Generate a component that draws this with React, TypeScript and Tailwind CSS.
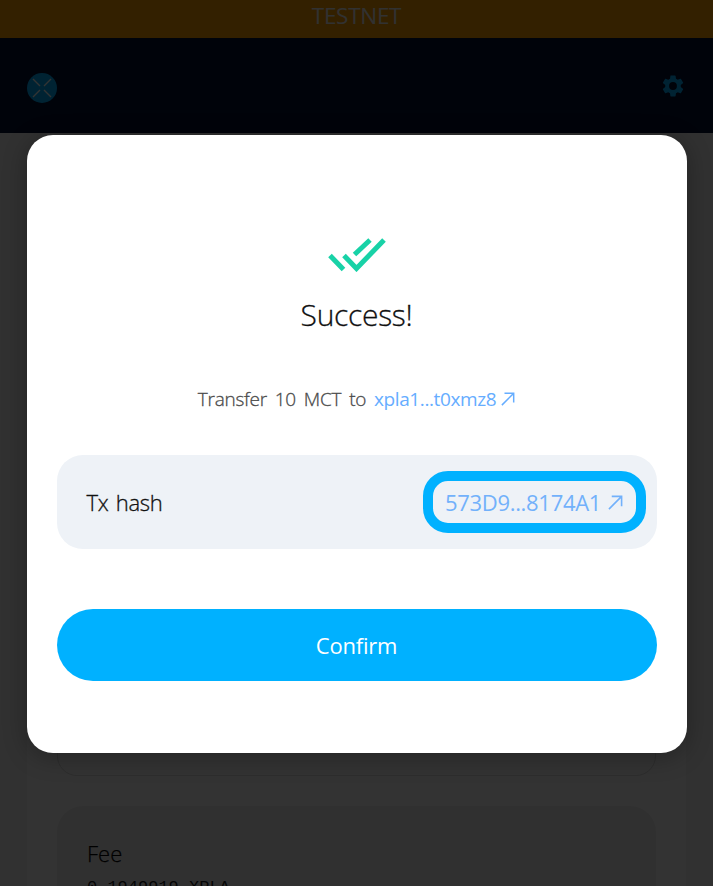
import React from "react";

function ArrowIcon({ className }: { className: string }) {
  return (
    <svg viewBox="0 0 16 16" fill="none" stroke="currentColor" strokeWidth="1.7" className={className}>
      <path d="M1 15 14.5 1.5M4 1.5h10.5v10.5" />
    </svg>
  );
}

function Logo() {
  return (
    <svg viewBox="0 0 30 30" className="h-[30px] w-[30px]">
      <circle cx="15" cy="15" r="15" fill="#00b1ff" />
      <path d="M6 6l7 7M24 6l-7 7M6 24l7-7M24 24l-7-7" stroke="#fff" strokeWidth="1.4" />
    </svg>
  );
}

function Gear() {
  return (
    <svg viewBox="0 0 24 24" fill="#00b1ff" className="h-[26px] w-[26px]">
      <path d="M19.14 12.94c.04-.3.06-.61.06-.94 0-.32-.02-.64-.07-.94l2.03-1.58a.49.49 0 0 0 .12-.61l-1.92-3.32a.488.488 0 0 0-.59-.22l-2.39.96c-.5-.38-1.03-.7-1.62-.94l-.36-2.54a.484.484 0 0 0-.48-.41h-3.84c-.24 0-.43.17-.47.41l-.36 2.54c-.59.24-1.13.57-1.62.94l-2.39-.96c-.22-.08-.47 0-.59.22L2.74 8.87c-.12.21-.08.47.12.61l2.03 1.58c-.05.3-.09.63-.09.94s.02.64.07.94l-2.03 1.58a.49.49 0 0 0-.12.61l1.92 3.32c.12.22.37.29.59.22l2.39-.96c.5.38 1.03.7 1.62.94l.36 2.54c.05.24.24.41.48.41h3.84c.24 0 .44-.17.47-.41l.36-2.54c.59-.24 1.13-.56 1.62-.94l2.39.96c.22.08.47 0 .59-.22l1.92-3.32c.12-.22.07-.47-.12-.61l-2.01-1.58zM12 15.6A3.6 3.6 0 1 1 12 8.4a3.6 3.6 0 0 1 0 7.2z" />
    </svg>
  );
}

function Page() {
  return (
    <div className="flex h-full flex-col bg-[#f4f4f4]">
      <div className="flex h-[38px] shrink-0 justify-center bg-[#ffa000] text-[22.5px] leading-[32px] text-[#f5f5f5]">
        <span className="tracking-[-0.3px]">TESTNET</span>
      </div>
      <header className="flex h-[95px] shrink-0 items-center justify-between bg-[#001032] pr-[27px] pl-[27px]">
        <div className="pt-1"><Logo /></div>
        <Gear />
      </header>
      <main className="mx-[27px] mt-[60px] flex flex-1 flex-col overflow-hidden bg-white px-[30px]">
        <div className="h-[583px] shrink-0 rounded-[20px] border border-[#dedede]" />
        <div className="mt-[30px] h-[200px] shrink-0 rounded-[26px] bg-[#f0f0f0] px-[30px] pt-[31px] text-black">
          <div className="text-[22px] leading-[32px] font-light [-webkit-text-stroke:0.25px]">Fee</div>
          <div className="pt-[9px] font-['Liberation_Mono',monospace] text-[17px] leading-[20px] text-[#222]">0.1949919 XPLA</div>
        </div>
      </main>
    </div>
  );
}

export default function App() {
  return (
    <div className="relative h-[886px] w-[713px] overflow-hidden font-['Open_Sans','Noto_Sans',sans-serif]">
      <Page />
      <div className="absolute inset-0 flex items-start justify-center bg-black/80 pt-[135px]">
        <section className="flex h-[618px] w-[660px] flex-col items-center rounded-[26px] bg-white px-[30px] pt-[103px] shadow-[0_4px_24px_rgba(0,0,0,0.3)]">
          <svg viewBox="0 0 58 34" className="h-[34px] w-[58px]" fill="none" stroke="#18d2a7" strokeWidth="5">
            <path d="M2 17.5 15.5 31.5M16 17.5 28.5 30.5 56 2M26.5 16.5 42 2" />
          </svg>
          <h1 className="mt-[23px] text-[30px] leading-[40px] font-light tracking-[-0.3px] text-[#101010] [-webkit-text-stroke:0.3px]">Success!</h1>
          <p className="mt-[50px] flex h-[28px] items-center text-[19px] text-[#4a4a4a]">
            <span className="font-light tracking-[-0.25px] whitespace-pre [-webkit-text-stroke:0.3px] [word-spacing:3.2px]">Transfer 10 MCT to </span>
            <a className="flex items-center tracking-[-0.4px] text-[#66adff]">xpla1...t0xmz8<ArrowIcon className="ml-[5px] h-[14px] w-[14px]" /></a>
          </p>
          <div className="mt-[42px] flex h-[94px] w-full shrink-0 items-center justify-between rounded-[26px] bg-[#eef2f7] pr-[11px] pl-[30px]">
            <span className="text-[22px] font-light tracking-[-0.3px] text-[#111] [-webkit-text-stroke:0.3px] [word-spacing:2px]">Tx hash</span>
            <a className="flex h-[62px] w-[223px] items-center justify-center rounded-[25px] border-[10px] border-[#00b1ff] text-[22px] text-[#72b1fb]">
              <span className="tracking-[-0.3px]">573D9...8174A1</span>
              <ArrowIcon className="ml-[7px] h-[15px] w-[15px]" />
            </a>
          </div>
          <button className="mt-[60px] h-[72px] w-full shrink-0 rounded-full bg-[#00b1ff] text-[22px] tracking-[-0.2px] text-white">Confirm</button>
        </section>
      </div>
    </div>
  );
}
